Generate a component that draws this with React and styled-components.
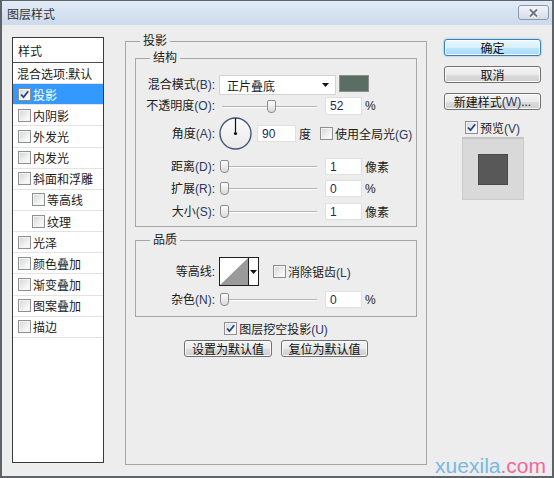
import React from 'react'
import styled, { createGlobalStyle } from 'styled-components'

const GlobalStyle = createGlobalStyle`
  html, body {
    margin: 0;
    padding: 0;
  }
  body {
    font-family: "Liberation Sans", "Noto Sans CJK SC", sans-serif;
    font-size: 12px;
    color: #1b1b1b;
    background: #ededed;
  }
`

const styleItems = [
  { name: '混合选项:默认', plain: true },
  { name: '投影', checked: true, active: true },
  { name: '内阴影' },
  { name: '外发光' },
  { name: '内发光' },
  { name: '斜面和浮雕' },
  { name: '等高线', sub: true },
  { name: '纹理', sub: true },
  { name: '光泽' },
  { name: '颜色叠加' },
  { name: '渐变叠加' },
  { name: '图案叠加' },
  { name: '描边' },
]

const CheckMark = () => (
  <svg width="11" height="11" viewBox="0 0 11 11">
    <path d="M2 5.5 L4.5 8.2 L9.2 2.2" fill="none" stroke="#23408f" strokeWidth="1.8" />
  </svg>
)

const Caret = () => (
  <svg width="7" height="4" viewBox="0 0 7 4">
    <path d="M0 0 H7 L3.5 4 Z" fill="#111" />
  </svg>
)

const CheckBox = ({ checked }) => (
  <Box>{checked && <CheckMark />}</Box>
)

const Slider = ({ value }) => (
  <SliderWrap>
    <Thumb style={{ left: `${1 + (value / 100) * 91}px` }} />
  </SliderWrap>
)

const App = () => {
  return (
    <>
      <GlobalStyle />
      <Window>
        <TitleBar>
          <Title>图层样式</Title>
          <CloseButton>
            <svg width="13" height="10" viewBox="0 0 13 10">
              <path d="M3 1.5 L10 8.5 M10 1.5 L3 8.5" stroke="#fff" strokeWidth="4.2" />
              <path d="M3 1.5 L10 8.5 M10 1.5 L3 8.5" stroke="#6c7686" strokeWidth="2" />
            </svg>
          </CloseButton>
        </TitleBar>

        <Body>
          <StylePanel>
            <PanelHeader>样式</PanelHeader>
            {styleItems.map((item, index) => (
              <PanelRow key={index} $sub={item.sub} $active={item.active} $plain={item.plain}>
                {!item.plain && <CheckBox checked={item.checked} />}
                <span>{item.name}</span>
              </PanelRow>
            ))}
          </StylePanel>

          <MainGroup>
            <Legend $offset={5}>投影</Legend>

            <SubGroup $mt={0}>
              <Legend $offset={14}>结构</Legend>

              <FormRow $h={20} $mt={10}>
                <Label>混合模式<Key>(B)</Key>:</Label>
                <Controls>
                  <Select>
                    <span>正片叠底</span>
                    <Caret />
                  </Select>
                  <Swatch />
                </Controls>
              </FormRow>

              <FormRow $h={18} $mt={2}>
                <Label>不透明度<Key>(O)</Key>:</Label>
                <Controls>
                  <Slider value={52} />
                  <Field $h={18}>52</Field>
                  <Unit>%</Unit>
                </Controls>
              </FormRow>

              <FormRow $h={33} $mt={2}>
                <Label>角度<Key>(A)</Key>:</Label>
                <Controls>
                  <svg width="33" height="33" viewBox="0 0 33 33">
                    <defs>
                      <linearGradient id="dialFill" x1="0" y1="0" x2="0" y2="1">
                        <stop offset="0" stopColor="#fbfbfb" />
                        <stop offset="1" stopColor="#e9e9e9" />
                      </linearGradient>
                    </defs>
                    <circle cx="16.5" cy="16.5" r="15.5" fill="url(#dialFill)" stroke="#43567a" strokeWidth="1.4" />
                    <line x1="16.5" y1="16.5" x2="16.5" y2="1" stroke="#111" strokeWidth="1.2" />
                    <circle cx="16.5" cy="16.5" r="1.6" fill="#111" />
                  </svg>
                  <Field $w={39} $ml={5}>90</Field>
                  <Unit>度</Unit>
                  <CheckLabel $ml={9}>
                    <CheckBox />
                    <span>使用全局光<Key>(G)</Key></span>
                  </CheckLabel>
                </Controls>
              </FormRow>

              <FormRow $h={17} $mt={8}>
                <Label>距离<Key>(D)</Key>:</Label>
                <Controls>
                  <Slider value={0} />
                  <Field>1</Field>
                  <Unit>像素</Unit>
                </Controls>
              </FormRow>

              <FormRow $h={17} $mt={5}>
                <Label>扩展<Key>(R)</Key>:</Label>
                <Controls>
                  <Slider value={0} />
                  <Field>0</Field>
                  <Unit>%</Unit>
                </Controls>
              </FormRow>

              <FormRow $h={17} $mt={6}>
                <Label>大小<Key>(S)</Key>:</Label>
                <Controls>
                  <Slider value={0} />
                  <Field>1</Field>
                  <Unit>像素</Unit>
                </Controls>
              </FormRow>
            </SubGroup>

            <SubGroup $mt={6} $pb={8}>
              <Legend $offset={14}>品质</Legend>

              <FormRow $h={29} $mt={10}>
                <Label>等高线:</Label>
                <Controls>
                  <Contour>
                    <svg width="28" height="27" viewBox="0 0 28 27">
                      <rect width="28" height="27" fill="#fff" />
                      <path d="M0 27 L28 0 L28 27 Z" fill="#9a9a9a" />
                    </svg>
                    <ContourDrop>
                      <Caret />
                    </ContourDrop>
                  </Contour>
                  <CheckLabel $ml={14}>
                    <CheckBox />
                    <span>消除锯齿<Key>(L)</Key></span>
                  </CheckLabel>
                </Controls>
              </FormRow>

              <FormRow $h={17} $mt={5}>
                <Label>杂色<Key>(N)</Key>:</Label>
                <Controls>
                  <Slider value={0} />
                  <Field>0</Field>
                  <Unit>%</Unit>
                </Controls>
              </FormRow>
            </SubGroup>

            <CenterRow $mt={4}>
              <CheckLabel>
                <CheckBox checked />
                <span>图层挖空投影<Key>(U)</Key></span>
              </CheckLabel>
            </CenterRow>

            <CenterRow $mt={5}>
              <Button $w={88}>设置为默认值</Button>
              <Button $w={87}>复位为默认值</Button>
            </CenterRow>
          </MainGroup>

          <SideColumn>
            <Button $w={97} $primary>确定</Button>
            <Button $w={97} $mt={10}>取消</Button>
            <Button $w={97} $mt={10}>新建样式<Key>(W)</Key>...</Button>
            <CheckLabel $mt={10}>
              <CheckBox checked />
              <span>预览<Key>(V)</Key></span>
            </CheckLabel>
            <Preview>
              <PreviewSquare />
            </Preview>
          </SideColumn>
        </Body>

        <Watermark>xuexila<Pink>.com</Pink></Watermark>
      </Window>
    </>
  )
}

const Window = styled.div`
  position: relative;
  width: 554px;
  height: 478px;
  box-sizing: border-box;
  border: 2px solid #5e636a;
  border-top-width: 1px;
  background: #ededed;
  display: flex;
  flex-direction: column;
  overflow: hidden;
`
const TitleBar = styled.div`
  height: 24px;
  flex: none;
  display: flex;
  align-items: center;
  justify-content: space-between;
  padding: 0 3px 0 5px;
  background: linear-gradient(#e1ebf7, #cbdaec);
`
const Title = styled.span`
  color: #333;
  font-size: 12px;
`
const CloseButton = styled.div`
  width: 31px;
  height: 15px;
  box-sizing: border-box;
  align-self: flex-start;
  margin-top: 4px;
  border: 1px solid #8b98ab;
  border-radius: 3px;
  background: linear-gradient(#f2f5f9, #d4dce7);
  display: flex;
  align-items: center;
  justify-content: center;
`
const Body = styled.div`
  flex: 1;
  display: flex;
  align-items: flex-start;
  padding: 9px 0 0 10px;
`
const StylePanel = styled.div`
  width: 92px;
  height: 426px;
  margin-top: 3px;
  box-sizing: border-box;
  border: 1px solid #3a3a3a;
  background: #fff;
  flex: none;
`
const PanelHeader = styled.div`
  height: 25px;
  box-sizing: border-box;
  display: flex;
  align-items: center;
  padding-left: 5px;
  border-bottom: 1px solid #4d4d4d;
`
const PanelRow = styled.div`
  height: 21.15px;
  box-sizing: border-box;
  display: flex;
  align-items: center;
  gap: 2px;
  padding-left: ${p => (p.$sub ? 19 : p.$plain ? 4 : 5)}px;
  border-bottom: 1px solid #e3e3e3;
  background: ${p => (p.$active ? '#3399ff' : '#fff')};
  color: ${p => (p.$active ? '#fff' : '#1b1b1b')};
  white-space: nowrap;
`
const Box = styled.span`
  width: 13px;
  height: 13px;
  box-sizing: border-box;
  flex: none;
  border: 1px solid #8e8f8f;
  background: linear-gradient(135deg, #d2d4d6, #f8f8f8 75%);
  box-shadow: inset 0 0 0 1px #f4f4f4;
  display: flex;
  align-items: center;
  justify-content: center;
`
const MainGroup = styled.fieldset`
  margin: 0 0 0 21px;
  padding: 3px 9px 0;
  width: 302px;
  height: 431px;
  box-sizing: border-box;
  border: 1px solid #a6a6a6;
  min-width: 0;
  flex: none;
  display: flex;
  flex-direction: column;
`
const Legend = styled.legend`
  padding: 0 3px;
  margin-left: ${p => p.$offset}px;
  line-height: 14px;
  font-size: 12px;
  color: #1b1b1b;
`
const SubGroup = styled.fieldset`
  margin: ${p => p.$mt}px 0 0;
  padding: 0 0 ${p => p.$pb || 6}px;
  border: 1px solid #a6a6a6;
  min-width: 0;
`
const FormRow = styled.div`
  display: grid;
  grid-template-columns: 79px auto;
  column-gap: 4px;
  align-items: center;
  height: ${p => p.$h}px;
  margin-top: ${p => p.$mt}px;
`
const Label = styled.span`
  text-align: right;
  white-space: nowrap;
  line-height: 14px;
`
const Key = styled.span`
  color: #2b3764;
`
const Controls = styled.div`
  display: flex;
  align-items: center;
  height: 100%;
  white-space: nowrap;
`
const Select = styled.div`
  width: 117px;
  height: 20px;
  box-sizing: border-box;
  background: #fff;
  border: 1px solid #d3d3d3;
  padding: 0 6px 0 7px;
  display: flex;
  align-items: center;
  justify-content: space-between;
`
const Swatch = styled.div`
  width: 30px;
  height: 17px;
  box-sizing: border-box;
  margin-left: 3px;
  align-self: flex-start;
  background: #5b6e64;
  border: 1px solid #8a8f8c;
`
const SliderWrap = styled.div`
  position: relative;
  width: 106px;
  height: 17px;
  flex: none;
  &::before {
    content: '';
    position: absolute;
    left: 3px;
    right: 8px;
    top: 8px;
    height: 1px;
    background: #b4b4b4;
    box-shadow: 0 1px 0 #fff;
  }
`
const Thumb = styled.span`
  position: absolute;
  top: 2px;
  width: 9px;
  height: 13px;
  box-sizing: border-box;
  border: 1px solid #8c8c8c;
  border-radius: 2px 2px 4px 4px;
  background: linear-gradient(#fdfdfd, #d9d9d9);
`
const Field = styled.div`
  width: ${p => p.$w || 37}px;
  height: ${p => p.$h || 17}px;
  margin-left: ${p => p.$ml || 0}px;
  box-sizing: border-box;
  flex: none;
  background: #fff;
  border: 1px solid #e0e0e0;
  padding-left: 4px;
  display: flex;
  align-items: center;
  color: #1f2b58;
`
const Unit = styled.span`
  margin-left: 3px;
`
const CheckLabel = styled.div`
  display: flex;
  align-items: center;
  gap: 2px;
  height: 14px;
  margin-left: ${p => p.$ml || 0}px;
  margin-top: ${p => p.$mt || 0}px;
  white-space: nowrap;
`
const Contour = styled.div`
  display: flex;
  height: 29px;
  box-sizing: border-box;
  border: 1px solid #1e1e1e;
  background: #fff;
  flex: none;
`
const ContourDrop = styled.div`
  width: 9px;
  border-left: 1px solid #1e1e1e;
  display: flex;
  align-items: center;
  justify-content: center;
`
const CenterRow = styled.div`
  display: flex;
  justify-content: center;
  gap: 9px;
  margin-top: ${p => p.$mt}px;
`
const Button = styled.div`
  width: ${p => p.$w}px;
  height: 17px;
  margin-top: ${p => p.$mt || 0}px;
  box-sizing: border-box;
  flex: none;
  display: flex;
  align-items: center;
  justify-content: center;
  font-size: 12px;
  color: #111;
  white-space: nowrap;
  border: 1px solid ${p => (p.$primary ? '#3c7fb1' : '#707070')};
  border-radius: 3px;
  background: ${p =>
    p.$primary
      ? 'linear-gradient(#eaf6fd, #d9f0fc 50%, #bee6fd 51%, #a7d9f5)'
      : 'linear-gradient(#f4f4f4, #ebebeb 50%, #dddddd 51%, #cfcfcf)'};
  box-shadow: ${p => (p.$primary ? '0 0 2px #56b0ee, ' : '')}inset 0 0 0 1px #fbfbfb;
`
const SideColumn = styled.div`
  width: 97px;
  margin: 5px 0 0 17px;
  display: flex;
  flex-direction: column;
  align-items: center;
  flex: none;
`
const Preview = styled.div`
  width: 62px;
  height: 63px;
  margin-top: 3px;
  box-sizing: border-box;
  background: #d9d9d9;
  border: 1px solid #cbcbcb;
  border-top: 2px solid #c4c4c4;
  display: flex;
  align-items: center;
  justify-content: center;
`
const PreviewSquare = styled.div`
  width: 30px;
  height: 31px;
  box-sizing: border-box;
  background: #585858;
  border: 1px solid #484848;
`
const Watermark = styled.div`
  position: absolute;
  right: 6px;
  bottom: 0;
  font-family: "Liberation Sans", Arial, sans-serif;
  font-size: 21px;
  line-height: 20px;
  color: #78b8e2;
`
const Pink = styled.span`
  color: #f2679f;
`

export default App
